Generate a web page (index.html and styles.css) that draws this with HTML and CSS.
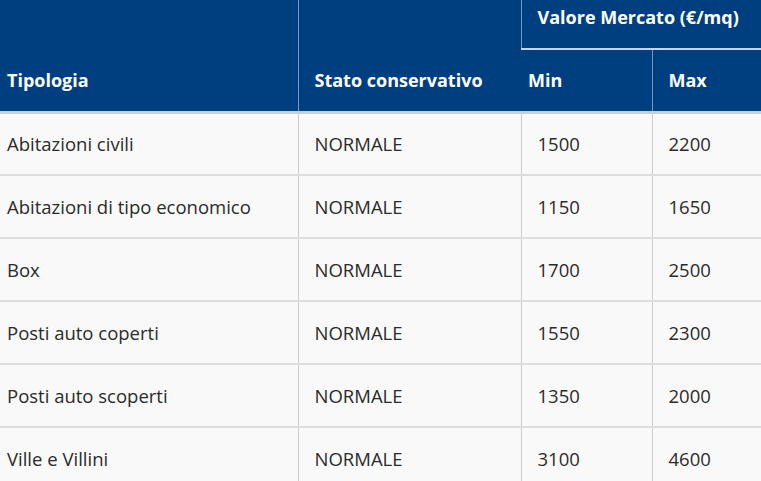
FILE: index.html
```html
<!DOCTYPE html>
<html lang="it">
<head>
<meta charset="utf-8">
<title>Valori di mercato</title>
<link rel="stylesheet" href="styles.css">
</head>
<body>
<table class="prices">
  <colgroup>
    <col class="c-tipo">
    <col class="c-stato">
    <col class="c-min">
    <col class="c-max">
  </colgroup>
  <thead>
    <tr class="head-top">
      <th class="col-tipo" rowspan="2">Tipologia</th>
      <th class="col-stato" rowspan="2">Stato conservativo</th>
      <th class="group" colspan="2">Valore Mercato (€/mq)</th>
    </tr>
    <tr class="head-sub">
      <th class="col-min">Min</th>
      <th class="col-max">Max</th>
    </tr>
  </thead>
  <tbody>
    <tr><td>Abitazioni civili</td><td>NORMALE</td><td>1500</td><td>2200</td></tr>
    <tr><td>Abitazioni di tipo economico</td><td>NORMALE</td><td>1150</td><td>1650</td></tr>
    <tr><td>Box</td><td>NORMALE</td><td>1700</td><td>2500</td></tr>
    <tr><td>Posti auto coperti</td><td>NORMALE</td><td>1550</td><td>2300</td></tr>
    <tr><td>Posti auto scoperti</td><td>NORMALE</td><td>1350</td><td>2000</td></tr>
    <tr><td>Ville e Villini</td><td>NORMALE</td><td>3100</td><td>4600</td></tr>
  </tbody>
</table>
</body>
</html>
```

FILE: styles.css
```css
html, body {
  margin: 0;
  padding: 0;
  background: #ffffff;
}

.prices {
  width: 761px;
  border-collapse: collapse;
  table-layout: fixed;
  font-family: "Open Sans", "Liberation Sans", sans-serif;
  font-size: 18.5px;
  color: #2b2b2b;
}

.c-tipo { width: 298px; }
.c-stato { width: 223px; }
.c-min { width: 131px; }
.c-max { width: 109px; }

.prices th,
.prices td {
  box-sizing: border-box;
  white-space: nowrap;
}

.prices th {
  background: #003f7f;
  color: #ffffff;
  font-size: 18px;
  font-weight: 700;
  text-align: left;
  padding: 0 16px;
  border-left: 1px solid #7d96ba;
}

.prices th:first-child {
  border-left: none;
  padding-left: 7px;
}

.head-top th {
  height: 49px;
}

.head-top .col-tipo,
.head-top .col-stato {
  vertical-align: bottom;
  padding-bottom: 19px;
  border-bottom: 3px solid #cfcfcf;
}

.head-top .group {
  vertical-align: top;
  padding-top: 5px;
  border-bottom: 2px solid #c9d3e2;
}

.head-sub th {
  height: 63px;
  vertical-align: middle;
  border-bottom: 3px solid #cfcfcf;
}

.prices td {
  background: #f9f9f9;
  height: 63px;
  padding: 0 16px;
  vertical-align: middle;
  border-left: 1px solid #cccccc;
  border-bottom: 2px solid #dddddd;
}

.prices td:first-child {
  border-left: none;
  padding-left: 7px;
}
```
